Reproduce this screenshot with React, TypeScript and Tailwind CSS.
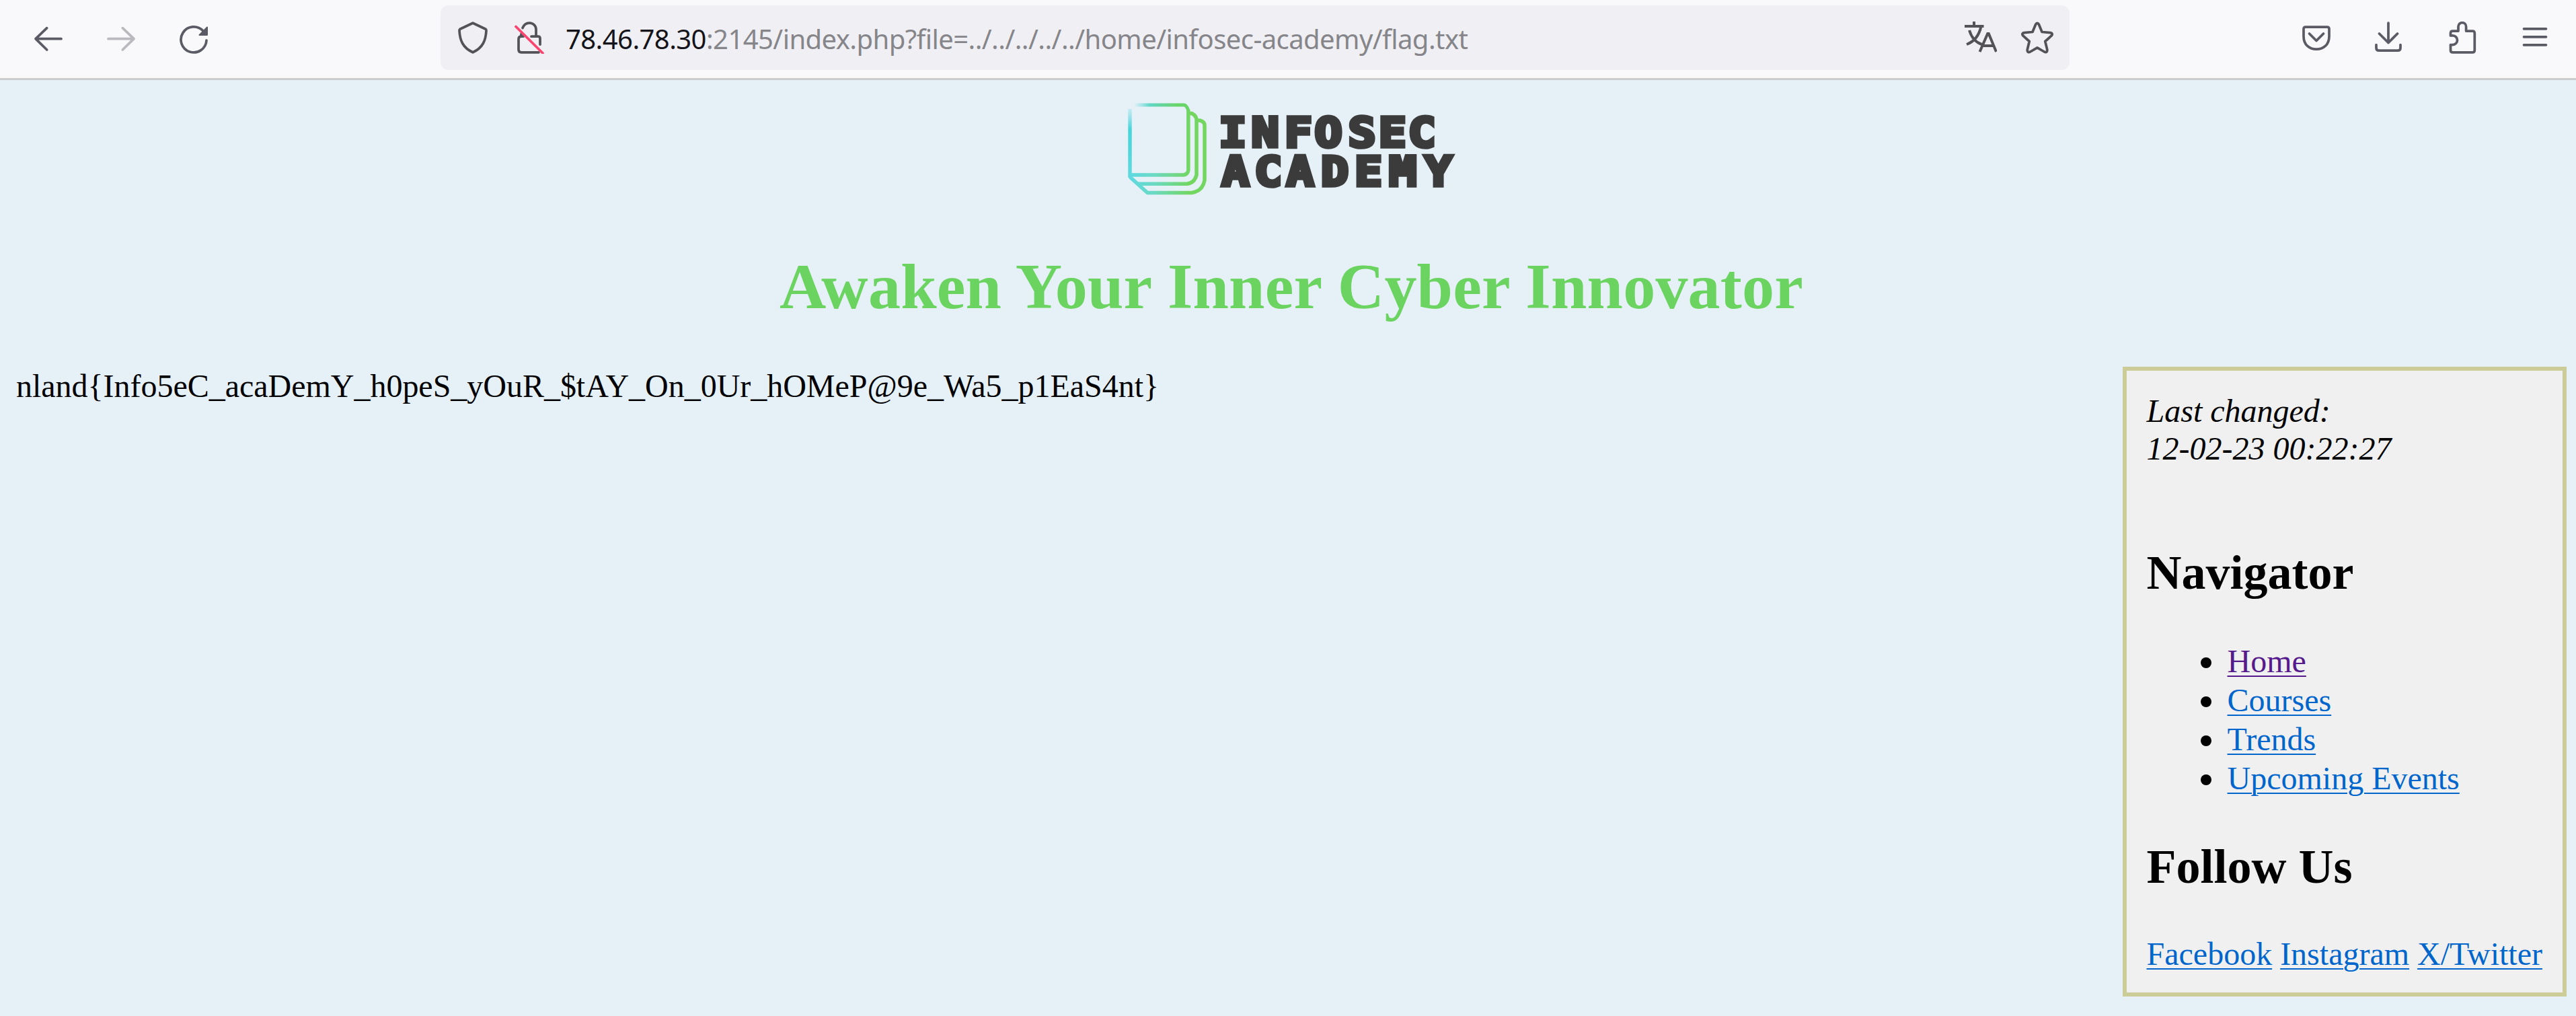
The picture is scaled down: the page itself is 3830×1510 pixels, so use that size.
import type { ReactNode } from "react";

function Icon({ children, className = "" }: { children: ReactNode; className?: string }) {
  return (
    <svg
      viewBox="0 0 48 48"
      className={`size-12 shrink-0 ${className}`}
      fill="none"
      stroke="currentColor"
      strokeWidth="3.75"
      strokeLinecap="round"
      strokeLinejoin="round"
    >
      {children}
    </svg>
  );
}

function Toolbar() {
  return (
    <header className="flex h-[119px] items-start border-b-3 border-[#cccccc] bg-[#f9f9fb] pt-2 text-[#5b5b66]">
      <nav className="flex h-24 w-[655px] shrink-0 items-center gap-[60px] pl-12">
        <Icon>
          <path d="M43 25.7H5.5M21.7 9.7 5 25.7l16.7 16.3" />
        </Icon>
        <Icon className="text-[#b9b9be]">
          <path d="M5 25.7h37.5M26.3 9.7 43 25.7 26.3 42" />
        </Icon>
        <Icon>
          <path d="M43 28A19 19 0 1 1 38 14" />
          <path d="M44 8.5v11.500H32.500Z" fill="currentColor" strokeWidth="2" />
        </Icon>
      </nav>
      <div className="flex h-24 w-[2422px] shrink-0 items-center rounded-xl bg-[#f0f0f4] pl-6 pr-6 text-[#525257]">
        <Icon>
          <path d="M24 2.2 43 11.2Q44.2 12 44 13.5C43.2 28 39 39 24 45.8 9 39 4.800 28 4 13.500Q3.800 12 5 11.200Z" />
        </Icon>
        <Icon className="ml-9">
          <path d="M14 9.500C16 4.500 19.500 2 24 2c6 0 10 4.500 10 10v10M12 22v-3.500M11 22.200h3M27 22.200h10q3 0 3 3V34M38 45.800H12q-4 0-4-4V26.200q0-4 4-4h3" />
          <path d="M4 7.500 44 47" stroke="#fb4570" />
        </Icon>
        <p className="ml-[30px] flex-1 whitespace-nowrap pt-[3px] font-['Noto_Sans',sans-serif] text-[40px] leading-[56px] tracking-[-0.57px] text-[#85858a]">
          <span className="text-[#15141a]">78.46.78.30</span>
          :2145/index.php?file=../../../../../home/infosec-academy/flag.txt
        </p>
        <Icon>
          <g strokeLinecap="butt" strokeLinejoin="miter" strokeWidth="4">
            <path d="M0 7h28.500M14 0v7M24.500 7C22 19 16 29 3 34M7 13c3 10 9.500 18 18.500 21M22.500 45 34.200 18h1.600L47 45M26 36h17" />
          </g>
        </Icon>
        <Icon className="ml-9">
          <path d="M21.500 4.500q2.500-4.500 5 0L31 15.500l12.500 1.200q4.500 1 1.500 4.500L35.800 29.500l3 12.500q.2 5-4.300 3L24 38.800 13.500 45q-4.500 2-4.300-3l3-12.500L3 21.200q-3-3.500 1.500-4.500L17 15.500Z" />
        </Icon>
      </div>
      <nav className="flex h-24 flex-1 items-center justify-end gap-[61px] pr-[37px]">
        <Icon className="-mr-[2px]">
          <path d="M8 8h32q3 0 3 3v11c0 13-9 19.200-19 19.200S5 35 5 22V11q0-3 3-3Z" />
          <path d="M13.500 18 24 28.500 34.500 18" />
        </Icon>
        <Icon>
          <path d="M24 2v29.500M10.500 18 24 31.500 37.500 18M6 34.500V39q0 4.200 4 4.200h28q4 0 4-4.200v-4.500" />
        </Icon>
        <Icon>
          <path d="M10.500 14H19V7.500a5.800 5.800 0 0 1 11.600 0V14h9.400q3.300 0 3.300 3.300V42.500q0 3.400-3.300 3.400H10.800q-3.300 0-3.300-3.400V34.500h3.200a6.800 6.800 0 0 0 0-13.600H7.500V17.300Q7.500 14 10.500 14Z" />
        </Icon>
        <Icon>
          <path d="M7.500 10.800h33M7.500 22.800h33M7.500 34.800h33" />
        </Icon>
      </nav>
    </header>
  );
}

function Logo() {
  return (
    <svg viewBox="1664 140 512 160" className="h-[160px] w-[512px]" aria-label="Infosec Academy">
      <defs>
        <linearGradient id="edge" gradientUnits="userSpaceOnUse" x1="1680" y1="0" x2="1768" y2="0">
          <stop offset="0" stopColor="#5dd9e0" />
          <stop offset="0.4" stopColor="#6bdac4" />
          <stop offset="1" stopColor="#72d661" />
        </linearGradient>
        <linearGradient id="top" gradientUnits="userSpaceOnUse" x1="1686" y1="0" x2="1766" y2="0">
          <stop offset="0" stopColor="#5dd9e0" stopOpacity="0" />
          <stop offset="0.3" stopColor="#5fd6c4" />
          <stop offset="0.8" stopColor="#68d568" />
        </linearGradient>
        <linearGradient id="left" gradientUnits="userSpaceOnUse" x1="0" y1="161" x2="0" y2="264">
          <stop offset="0" stopColor="#5dd9e0" stopOpacity="0.2" />
          <stop offset="0.3" stopColor="#46d5dc" />
          <stop offset="1" stopColor="#60d9e0" />
        </linearGradient>
      </defs>
      <g fill="none" strokeWidth="5.5" strokeLinejoin="round">
        <path d="M1680 162V264" stroke="url(#left)" />
        <path d="M1687 156H1760Q1764 156 1766.800 164" stroke="url(#top)" strokeWidth="5" />
        <path d="M1766.800 163V253Q1766 259 1760 260H1680" stroke="url(#edge)" />
        <path d="M1768 168.500H1772Q1779 172 1779 179V260Q1776 272 1765 273.300H1692" stroke="url(#edge)" />
        <path d="M1780 179H1784Q1791 181 1791 186V268Q1788 284 1772 286.500H1706L1680 263" stroke="url(#edge)" />
      </g>
      <g
        transform="translate(1815 0) scale(1.12 1)"
        className="font-['DejaVu_Sans_Mono',monospace] font-bold"
        fontSize="61"
        fill="#3b3b3b"
        stroke="#3b3b3b"
        strokeWidth="5.5"
        textAnchor="middle"
      >
        <text x="16 59 103 143 187.500 228 267" y="218">INFOSEC</text>
        <text x="19.500 63 105.500 151.500 196 241.500 289" y="276.500">ACADEMY</text>
      </g>
    </svg>
  );
}

const pages = [
  { label: "Home", tone: "text-[#551a8b]" },
  { label: "Courses", tone: "text-[#0066cc]" },
  { label: "Trends", tone: "text-[#0066cc]" },
  { label: "Upcoming Events", tone: "text-[#0066cc]" },
];

const socials = ["Facebook", "Instagram", "X/Twitter"];

function Sidebar() {
  return (
    <aside className="shrink-0 border-6 border-[#cccc99] bg-[#f0f0f0] px-[30px] pb-[29px] pt-8">
      <p className="italic leading-[56px]">
        Last changed:
        <br />
        12-02-23 00:22:27
      </p>
      <h2 className="mt-[116px] text-7xl font-bold leading-[80px]">Navigator</h2>
      <ul className="mt-[63px] leading-[58px]">
        {pages.map((page) => (
          <li key={page.label} className="flex items-center pl-20">
            <span className="mr-6 mt-[3px] size-4 rounded-full bg-black" />
            <a href="#" className={`underline decoration-2 underline-offset-[5px] ${page.tone}`}>
              {page.label}
            </a>
          </li>
        ))}
      </ul>
      <h2 className="mt-[62px] text-7xl font-bold leading-[80px]">Follow Us</h2>
      <p className="mt-[62px] flex gap-3 leading-[56px]">
        {socials.map((name) => (
          <a key={name} href="#" className="text-[#0066cc] underline decoration-2 underline-offset-[5px]">
            {name}
          </a>
        ))}
      </p>
    </aside>
  );
}

export default function App() {
  return (
    <div className="flex h-[1510px] w-[3830px] flex-col overflow-hidden bg-[#e5f0f7]">
      <Toolbar />
      <main className="font-['Liberation_Serif',serif] text-5xl text-black">
        <div className="mt-[21px] flex justify-center pl-[10px]">
          <Logo />
        </div>
        <h1 className="mt-[71px] pl-[10px] text-center text-8xl font-bold leading-[110px] tracking-[0.22px] text-[#6bd35f]">
          Awaken Your Inner Cyber Innovator
        </h1>
        <div className="mt-[64px] flex items-start justify-between pl-6 pr-[14px]">
          <p className="mt-px leading-[56px] tracking-[-0.02px]">
            nland{"{"}Info5eC_acaDemY_h0peS_yOuR_$tAY_On_0Ur_hOMeP@9e_Wa5_p1EaS4nt{"}"}
          </p>
          <Sidebar />
        </div>
      </main>
    </div>
  );
}
